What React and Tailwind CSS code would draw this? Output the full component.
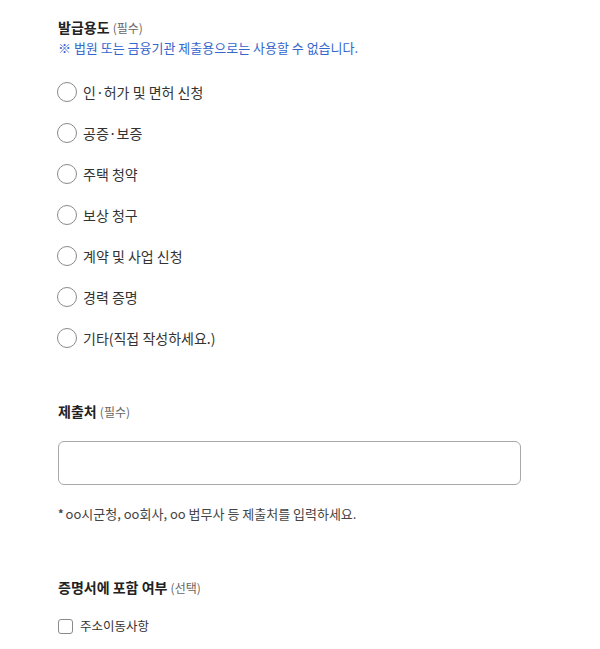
export default function App() {
  const options = [
    "인·허가 및 면허 신청",
    "공증·보증",
    "주택 청약",
    "보상 청구",
    "계약 및 사업 신청",
    "경력 증명",
    "기타(직접 작성하세요.)",
  ];
  return (
    <div
      className="w-[600px] h-[649px] bg-white overflow-hidden pl-[58px] pt-[17px] text-[#222]"
      style={{ fontFamily: '"Noto Sans CJK KR", "Noto Sans", sans-serif' }}
    >
      <div className="h-[20px] leading-[20px] text-[14px] font-bold">
        발급용도 <span className="text-[12px] font-normal text-[#666]">(필수)</span>
      </div>
      <div className="mt-[2px] h-[18px] leading-[18px] text-[13px] text-[#3566cc]">
        ※ 법원 또는 금융기관 제출용으로는 사용할 수 없습니다.
      </div>
      <div className="mt-[25px] flex flex-col gap-[21px]">
        {options.map((o) => (
          <label key={o} className="flex items-center h-[20px]">
            <span className="w-[20px] h-[20px] rounded-full border border-[#8a8a8a] bg-white shrink-0 -ml-[1px]" />
            <span className="ml-[6px] text-[14px] leading-[20px] text-[#333]">{o}</span>
          </label>
        ))}
      </div>
      <div className="mt-[53px] h-[20px] leading-[20px] text-[14px] font-bold">
        제출처 <span className="text-[12px] font-normal text-[#666]">(필수)</span>
      </div>
      <div className="mt-[20px] w-[463px] h-[44px] border border-[#a8a8a8] rounded-[6px]" />
      <div className="mt-[20px] h-[18px] leading-[18px] text-[13px] text-[#444]">
        <span className="text-[11px] font-bold align-top relative top-[-1px] mr-[2px]">*</span>oo시군청, oo회사, oo 법무사 등 제출처를 입력하세요.
      </div>
      <div className="mt-[54px] h-[20px] leading-[20px] text-[14px] font-bold">
        증명서에 포함 여부 <span className="text-[12px] font-normal text-[#666]">(선택)</span>
      </div>
      <label className="mt-[21px] flex items-center h-[16px]">
        <span className="w-[15px] h-[15px] rounded-[3px] border border-[#8a8a8a] bg-white shrink-0" />
        <span className="ml-[7px] text-[12.5px] leading-[16px] text-[#333]">주소이동사항</span>
      </label>
    </div>
  );
}
